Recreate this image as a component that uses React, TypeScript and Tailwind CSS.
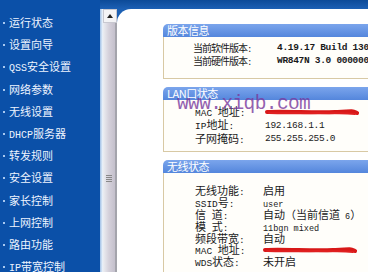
import React from "react";

const FONT = { fontFamily: '"Liberation Mono", "Noto Sans CJK SC", monospace' };
const CJK = { fontFamily: '"Noto Sans CJK SC", "Liberation Sans", sans-serif' };

function Mixed({ text, a, c }: { text: string; a: string; c: string }) {
  const parts = text.split(/([\x00-\x7F]+)/).filter((p) => p.length > 0);
  return (
    <>
      {parts.map((p, i) =>
        /^[\x00-\x7F]+$/.test(p) ? (
          <span key={i} className={a} style={{ fontFamily: '"Liberation Mono", monospace' }}>
            {p}
          </span>
        ) : (
          <span key={i} className={c} style={CJK}>
            {p}
          </span>
        )
      )}
    </>
  );
}

const menu = [
  "运行状态",
  "设置向导",
  "QSS安全设置",
  "网络参数",
  "无线设置",
  "DHCP服务器",
  "转发规则",
  "安全设置",
  "家长控制",
  "上网控制",
  "路由功能",
  "IP带宽控制",
];

function Scribble() {
  return (
    <svg width="94" height="8" viewBox="0 0 94 8" className="block">
      <path d="M2 4 C 20 3, 50 5, 70 4 S 88 3, 92 5" stroke="#d81818" strokeWidth="4" fill="none" strokeLinecap="round" />
      <path d="M4 5 C 30 6, 60 4, 90 6" stroke="#e02020" strokeWidth="2" fill="none" strokeLinecap="round" />
    </svg>
  );
}

function Header({ title }: { title: string }) {
  return (
    <div className="h-[13px] rounded-tl-[5px] bg-gradient-to-b from-[#7ba5ec] to-[#5486dc] pl-[4px] flex items-center">
      <span className="text-[11px] leading-none text-white tracking-[-0.5px]" style={CJK}>
        {title}
      </span>
    </div>
  );
}

export default function App() {
  return (
    <div className="w-[368px] h-[272px] overflow-hidden flex bg-white" style={FONT}>
      {/* sidebar */}
      <div className="w-[100px] shrink-0 h-full bg-[#0b50a8] flex flex-col pt-[12px]">
        {menu.map((m) => (
          <div key={m} className="h-[22.2px] shrink-0 flex items-center text-[#eef4ff]">
            <span className="w-[2px] h-[2px] bg-[#a8c8f0] ml-[3px] mr-[4px]" />
            <span className="leading-none whitespace-nowrap">
              <Mixed text={m} a="text-[10px]" c="text-[11px]" />
            </span>
          </div>
        ))}
      </div>

      {/* right side */}
      <div className="flex-1 h-full flex flex-col bg-[#0f4f9e]">
        <div className="h-[9px] shrink-0 bg-gradient-to-b from-[#0c4a98] to-[#1c60b4]" />
        <div className="flex-1 flex min-h-0 bg-[#1c60b4]">
          {/* scrollbar */}
          <div className="w-[17px] shrink-0 flex">
            <div className="w-[3px] bg-gradient-to-r from-[#9fc0e6] to-[#f4f8fc]" />
            <div className="w-[14px] flex flex-col bg-[#eef0f4]">
              <div className="h-[14px] shrink-0 bg-[#f4f4f6] border border-[#c8c8d0] flex items-center justify-center">
                <svg width="6" height="4" viewBox="0 0 6 4">
                  <path d="M3 0 L6 4 L0 4 Z" fill="#222" />
                </svg>
              </div>
              <div className="flex-1 flex bg-gradient-to-r from-[#eceef2] via-[#d4d0da] to-[#c4c0cc] border-r-2 border-[#a4a4ac] items-start justify-center">
                <div className="mt-[152px] flex flex-col gap-[1px]">
                  <div className="w-[6px] h-[1px] bg-[#888]" />
                  <div className="w-[6px] h-[1px] bg-[#888]" />
                  <div className="w-[6px] h-[1px] bg-[#888]" />
                  <div className="w-[6px] h-[1px] bg-[#888]" />
                </div>
              </div>
            </div>
          </div>

          {/* main panel */}
          <div className="flex-1 bg-white rounded-tl-[14px] pl-[46px] pt-[15px] relative">
            {/* 版本信息 */}
            <div className="w-[240px]">
              <Header title="版本信息" />
              <div className="h-[42px] border border-t-0 border-[#d8c9a4] bg-[#fffefa] pt-[4px] pl-[29px] text-[#1a1a1a]">
                {[
                  ["当前软件版本:", "4.19.17 Build 130"],
                  ["当前硬件版本:", "WR847N 3.0 000000"],
                ].map(([l, v]) => (
                  <div key={l} className="h-[13px] flex items-center whitespace-nowrap">
                    <span className="w-[84px] shrink-0 leading-none tracking-[-1px]">
                      <Mixed text={l} a="text-[9px]" c="text-[10px]" />
                    </span>
                    <span className="text-[9.5px] leading-none font-semibold tracking-[-0.3px]">{v}</span>
                  </div>
                ))}
              </div>
            </div>

            {/* LAN口状态 */}
            <div className="w-[240px] mt-[8px]">
              <Header title="LAN口状态" />
              <div className="h-[52px] border border-t-0 border-[#d8c9a4] bg-[#fffefa] pt-[5px] pl-[31px] text-[#1a1a1a]">
                <div className="h-[13.5px] flex items-center whitespace-nowrap">
                  <span className="w-[70px] shrink-0 leading-none">
                    <Mixed text="MAC 地址:" a="text-[9.5px]" c="text-[11px]" />
                  </span>
                  <Scribble />
                </div>
                <div className="h-[13.5px] flex items-center whitespace-nowrap">
                  <span className="w-[70px] shrink-0 leading-none">
                    <Mixed text="IP地址:" a="text-[9.5px]" c="text-[11px]" />
                  </span>
                  <span className="text-[9.5px] leading-none tracking-[-0.3px]">192.168.1.1</span>
                </div>
                <div className="h-[13.5px] flex items-center whitespace-nowrap">
                  <span className="w-[70px] shrink-0 leading-none">
                    <Mixed text="子网掩码:" a="text-[9.5px]" c="text-[11px]" />
                  </span>
                  <span className="text-[9.5px] leading-none tracking-[-0.3px]">255.255.255.0</span>
                </div>
              </div>
            </div>

            {/* 无线状态 */}
            <div className="w-[240px] mt-[8px]">
              <Header title="无线状态" />
              <div className="h-[140px] border border-t-0 border-[#d8c9a4] bg-[#fffefa] pt-[12px] pl-[31px] text-[#1a1a1a]">
                {[
                  ["无线功能:", "启用"],
                  ["SSID号:", "user"],
                  ["信 道:", "自动（当前信道 6）"],
                  ["模 式:", "11bgn mixed"],
                  ["频段带宽:", "自动"],
                  ["MAC 地址:", ""],
                  ["WDS状态:", "未开启"],
                ].map(([l, v]) => (
                  <div key={l} className="h-[11.9px] flex items-center whitespace-nowrap">
                    <span className="w-[68px] shrink-0 leading-none">
                      <Mixed text={l} a="text-[9.5px]" c="text-[11px]" />
                    </span>
                    {v === "" ? (
                      <Scribble />
                    ) : (
                      <span className="leading-none">
                        <Mixed text={v} a="text-[8.5px]" c="text-[11px]" />
                      </span>
                    )}
                  </div>
                ))}
              </div>
            </div>

            {/* watermark */}
            <div
              className="absolute left-[60px] top-[86px] text-[19.5px] leading-none text-[#7a3a9e] opacity-80 whitespace-nowrap tracking-[-0.6px]"
              style={{ fontFamily: '"Liberation Mono", monospace' }}
            >
              www.xiqb.com
            </div>
          </div>
        </div>
      </div>
    </div>
  );
}
